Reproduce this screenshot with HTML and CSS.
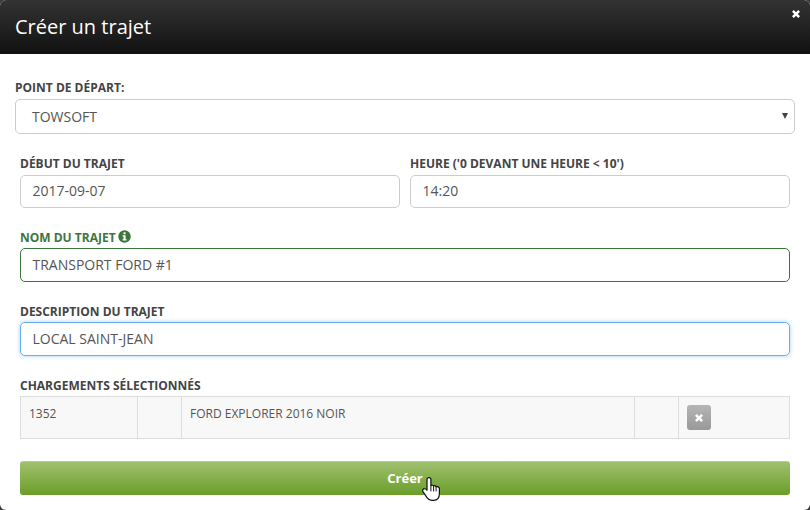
FILE: index.html
```html
<!DOCTYPE html>
<html lang="fr">
<head>
<meta charset="utf-8">
<title>Créer un trajet</title>
<link rel="stylesheet" href="styles.css">
</head>
<body>
<div class="modal">
  <header class="modal-header">
    <h1 class="modal-title">Créer un trajet</h1>
    <svg class="close" viewBox="0 0 8 8" width="8" height="8"><path d="M1.8 0 4 2.2 6.2 0 8 1.8 5.8 4 8 6.2 6.2 8 4 5.8 1.8 8 0 6.2 2.2 4 0 1.8Z" fill="#fff"/></svg>
  </header>
  <div class="modal-body">
    <div class="start">
      <label class="label">POINT DE DÉPART:</label>
      <div class="select">TOWSOFT<span class="caret"></span></div>
    </div>
    <div class="form">
      <div class="row">
        <div class="field">
          <label class="label">DÉBUT DU TRAJET</label>
          <div class="input">2017-09-07</div>
        </div>
        <div class="field">
          <label class="label">HEURE ('0 DEVANT UNE HEURE &lt; 10')</label>
          <div class="input">14:20</div>
        </div>
      </div>
      <div class="field">
        <label class="label label-ok">NOM DU TRAJET
          <svg class="info" viewBox="0 0 14 14" width="13" height="13"><circle cx="7" cy="7" r="6.7" fill="#3c763d"/><rect x="5.9" y="2.4" width="2.3" height="2.2" rx=".4" fill="#fff"/><path d="M4.9 5.7H8.2V9.9H9.2V11.3H4.9V9.9H5.9V7.1H4.9Z" fill="#fff"/></svg>
        </label>
        <div class="input input-ok">TRANSPORT FORD #1</div>
      </div>
      <div class="field">
        <label class="label">DESCRIPTION DU TRAJET</label>
        <div class="input input-focus">LOCAL SAINT-JEAN</div>
      </div>
      <div class="field">
        <label class="label">CHARGEMENTS SÉLECTIONNÉS</label>
        <table class="loads">
          <tr>
            <td class="c-id">1352</td>
            <td class="c-empty"></td>
            <td class="c-name">FORD EXPLORER 2016 NOIR</td>
            <td class="c-empty2"></td>
            <td class="c-action"><span class="remove"><svg viewBox="0 0 8 8" width="8" height="8"><path d="M1.8 0 4 2.2 6.2 0 8 1.8 5.8 4 8 6.2 6.2 8 4 5.8 1.8 8 0 6.2 2.2 4 0 1.8Z" fill="#fff"/></svg></span></td>
          </tr>
        </table>
      </div>
      <div class="submit"><span class="submit-text">Créer</span>
        <svg class="cursor" viewBox="0 0 18 24" width="18" height="24"><path d="M7 .6C8.1.6 8.9 1.4 8.9 2.6V8.6C9.7 8 11 8.1 11.6 9 12.4 8.6 13.6 8.9 14.1 9.8 15.3 9.4 17.4 9.9 17.4 11.6V16.6C17.4 20.4 15.4 23.4 11.6 23.4H9.6C7.2 23.4 6 22.2 4.8 20.4L1 14.6C.3 13.4.7 12.3 1.7 11.9 2.8 11.5 4 12 5 13.2V2.6C5 1.4 5.9.6 7 .6Z" fill="#fff" stroke="#111" stroke-width="1.2" stroke-linejoin="round"/><path d="M8.9 8.6V14.4M11.6 9V14.4M14.1 9.8V14.4" fill="none" stroke="#111" stroke-width="1"/></svg>
      </div>
    </div>
  </div>
</div>
</body>
</html>
```
FILE: styles.css
```css
* { box-sizing: border-box; }
html, body { margin: 0; height: 100%; }
body { background: #3a3a3a; font-family: "Open Sans", sans-serif; overflow: hidden; }
.modal { width: 810px; height: 510px; background: #fff; border-radius: 6px; overflow: hidden; }
.modal-header { position: relative; height: 54px; padding: 0 15px; display: flex; align-items: center; background: linear-gradient(#333333, #111111); }
.modal-title { margin: 0; font-size: 20px; font-weight: 400; color: #fff; line-height: 54px; }
.close { position: absolute; top: 10px; right: 10px; }
.modal-body { padding: 25px 15px 0; }
.label { display: block; font-size: 12px; font-weight: 700; line-height: 17px; height: 17px; margin-bottom: 2px; color: #444; }
.start .label { margin-bottom: 3px; }
.select { position: relative; height: 35px; line-height: 33px; padding-left: 16px; border: 1px solid #ccc; border-radius: 5px; font-size: 14px; color: #555; }
.caret { position: absolute; right: 6px; top: 13px; width: 0; height: 0; border-left: 3.5px solid transparent; border-right: 3.5px solid transparent; border-top: 6px solid #444; }
.form { padding: 0 5px; margin-top: 21px; display: flex; flex-direction: column; gap: 21px; }
.row { display: flex; gap: 10px; }
.row .field { flex: 1; }
.input { height: 33px; line-height: 29px; padding: 0 11px 0 12px; border: 1px solid #ccc; border-radius: 5px; font-size: 14px; color: #555; text-indent: -0.5px; }
.row .label { margin-bottom: 3px; }
.field > .input-ok, .field > .input-focus { height: 34px; line-height: 32px; }
.label-ok { color: #3c763d; display: flex; align-items: center; gap: 2px; }
.info { margin-top: -2px; }
.input-ok { border-color: #3c763d; }
.input-focus { border-color: #66afe9; box-shadow: 0 0 4px rgba(102, 175, 233, .6); }
.loads { width: 770px; height: 43px; border-collapse: collapse; table-layout: fixed; background: #f8f8f8; font-size: 12px; color: #555; }
.loads td { border: 1px solid #ddd; padding: 8px; vertical-align: top; line-height: 17px; }
.c-id { width: 117px; }
.c-empty { width: 44px; }
.c-name { width: 453px; }
.c-empty2 { width: 44px; }
.remove { display: flex; align-items: center; justify-content: center; width: 24px; height: 25px; margin: 0 0 0 -4px; border-radius: 3px; background: linear-gradient(#b5b5b5, #999); }
.loads .c-action { padding: 8px 8px 0 12px; }
.submit { position: relative; margin-top: 1px; height: 34px; line-height: 34px; text-align: center; font-size: 13px; font-weight: 700; color: #fff; border-radius: 3px; border-top: 1px solid #b9cc96; background: linear-gradient(#a0c070, #6a9e28); }
.submit-text { position: relative; top: -1px; }
.cursor { position: absolute; left: 402px; top: 15px; }
```
